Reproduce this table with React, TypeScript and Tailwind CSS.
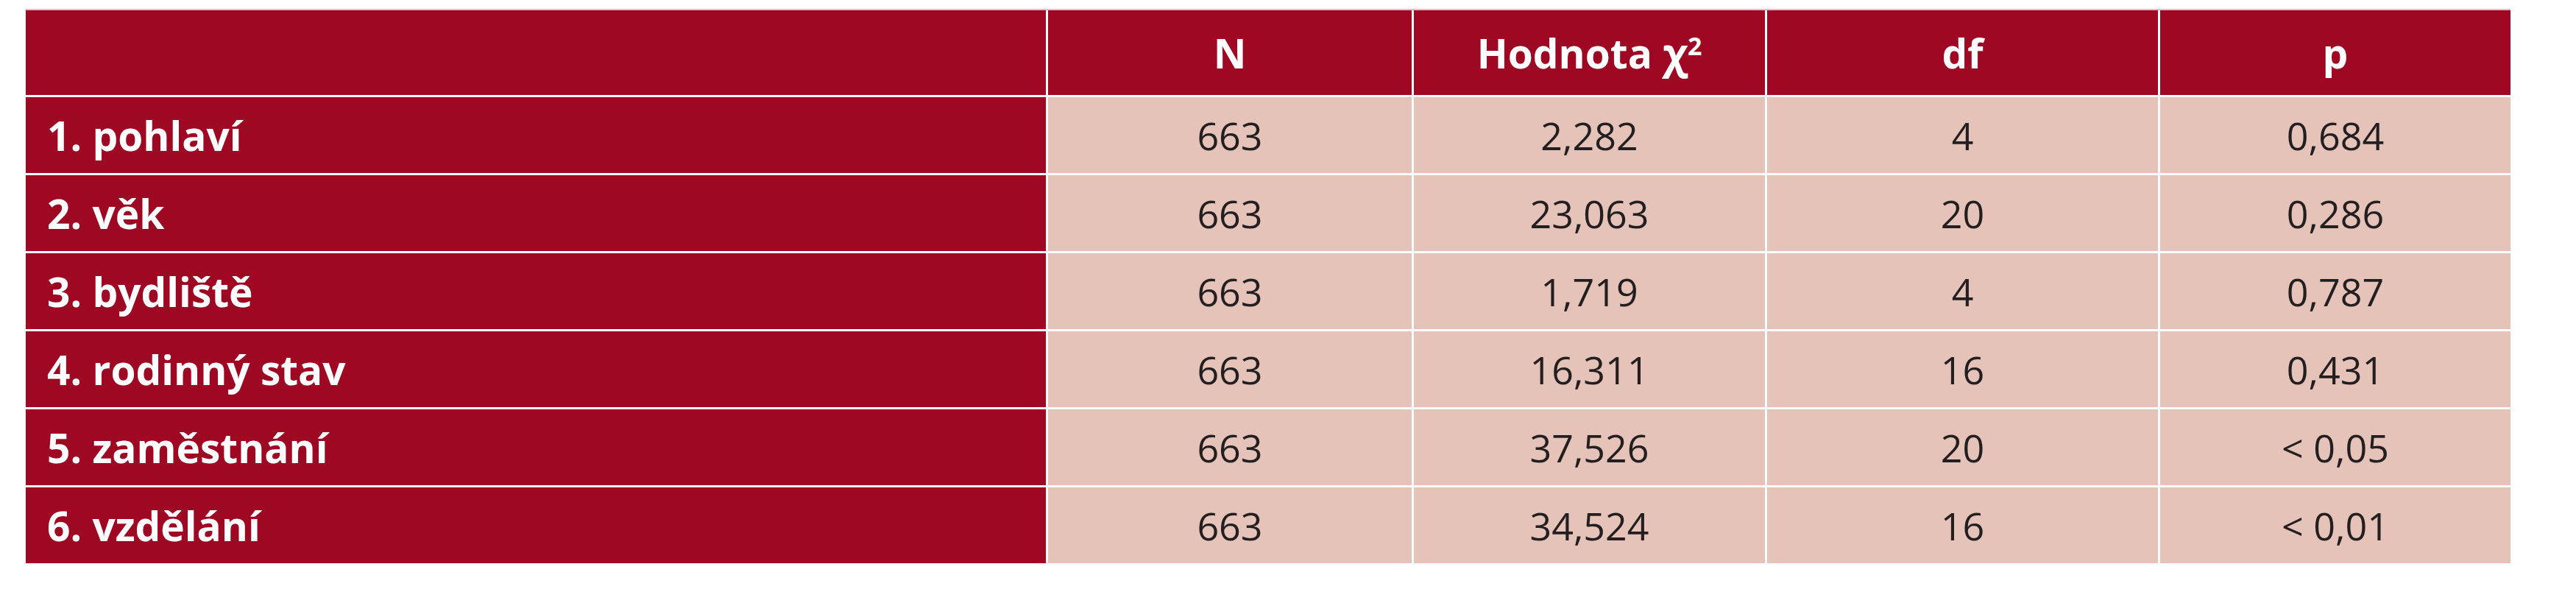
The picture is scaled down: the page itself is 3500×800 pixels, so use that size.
import React, { FC } from 'react';

type Row = {
  label: string;
  n: string;
  chi: string;
  df: string;
  p: string;
};

const ROWS: Row[] = [
  { label: '1. pohlaví', n: '663', chi: '2,282', df: '4', p: '0,684' },
  { label: '2. věk', n: '663', chi: '23,063', df: '20', p: '0,286' },
  { label: '3. bydliště', n: '663', chi: '1,719', df: '4', p: '0,787' },
  { label: '4. rodinný stav', n: '663', chi: '16,311', df: '16', p: '0,431' },
  { label: '5. zaměstnání', n: '663', chi: '37,526', df: '20', p: '< 0,05' },
  { label: '6. vzdělání', n: '663', chi: '34,524', df: '16', p: '< 0,01' },
];

const headCell =
  'flex items-center justify-center bg-[#9e0822] text-white font-bold text-[55px]';
const labelCell =
  'flex items-center bg-[#9e0822] pl-[29px] text-white font-bold text-[55px]';
const dataCell =
  'flex items-center justify-center bg-[#e5c3b9] text-[#231f20] text-[52px]';

const App: FC = () => {
  return (
    <div className="w-[3500px] h-[800px] bg-white pl-[35px] pt-[12px] font-['Open_Sans',_'Liberation_Sans',_sans-serif] leading-none">
      <div className="grid w-[3376px] grid-cols-[1386px_494px_477px_531px_476px] grid-rows-[115px_repeat(6,103px)] gap-[3px] border-t-2 border-[#f0b8c4]">
        <div className={headCell} />
        <div className={headCell}>N</div>
        <div className={headCell}>
          <span>
            Hodnota <span className="text-[57px]">χ</span>
            <span className="relative -top-[18px] text-[34px]">2</span>
          </span>
        </div>
        <div className={headCell}>df</div>
        <div className={headCell}>p</div>

        {ROWS.map((row) => (
          <React.Fragment key={row.label}>
            <div className={labelCell}>{row.label}</div>
            <div className={dataCell}>{row.n}</div>
            <div className={dataCell}>{row.chi}</div>
            <div className={dataCell}>{row.df}</div>
            <div className={dataCell}>{row.p}</div>
          </React.Fragment>
        ))}
      </div>
    </div>
  );
};

export default App;
